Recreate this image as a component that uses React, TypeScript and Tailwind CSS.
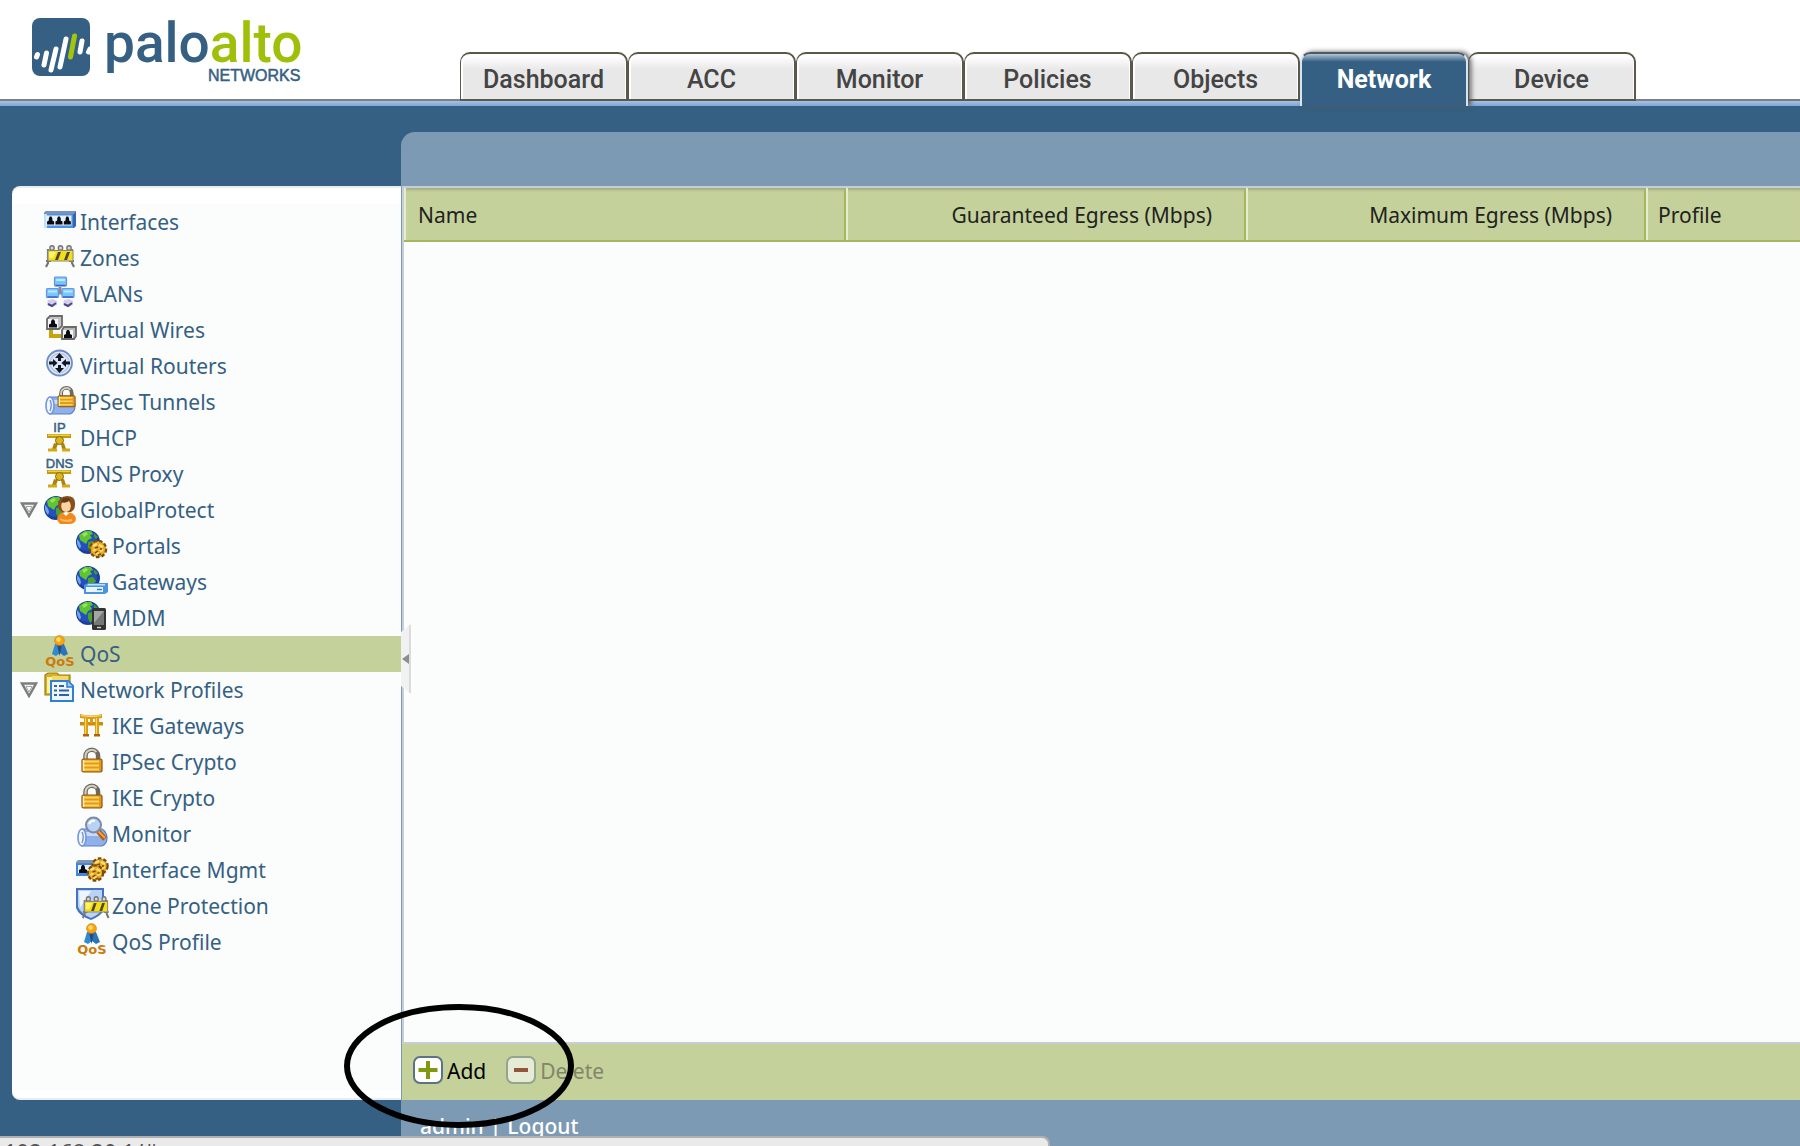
import type { ReactNode } from 'react';

const tabs = ['Dashboard', 'ACC', 'Monitor', 'Policies', 'Objects', 'Network', 'Device'];

function Icon({ children }: { children: ReactNode }) {
  return (
    <svg viewBox="0 0 32 32" className="h-8 w-8 shrink-0 overflow-visible" aria-hidden="true">
      {children}
    </svg>
  );
}

function Spade({ x, y }: { x: number; y: number }) {
  return <path d={`M${x - 1} ${y}h2l1 2v2l2 1v3h-8v-3l2-1v-2z`} fill="#0b0b12" />;
}

function Globe({ x = 12, y = 14, r = 12 }: { x?: number; y?: number; r?: number }) {
  const s = r / 12;
  return (
    <g transform={`translate(${x} ${y}) scale(${s})`}>
      <circle r="12" fill="#1d3f9c" />
      <circle cx="-1" cy="-1" r="10" fill="#2450bd" />
      <path d="M-11 -3a11 11 0 0 1 4 7l-1 3a11 11 0 0 1-3-6z" fill="#6fa8ee" />
      <path d="M-9 -7L-3 -11L3 -11L5 -8L2 -7L4 -4L0 -2L-2 2L-5 0L-8 -2z" fill="#5fc52e" />
      <path d="M0 0L5 -1L8 3L4 8L2 10L0 5z" fill="#4aa327" />
      <path d="M6 -9L10 -5L8 -3L6 -5z" fill="#3f9a2a" />
      <path d="M-6 -8L-2 -10L0 -8L-4 -5z" fill="#98e35a" />
    </g>
  );
}

function Gear({ x, y, r = 9 }: { x: number; y: number; r?: number }) {
  return (
    <g transform={`translate(${x} ${y})`}>
      <circle r={r - 1} fill="#d9981a" stroke="#7a4a08" strokeWidth="2.5" strokeDasharray="3.5 2" />
      <circle r={r - 2} fill="#e9ae28" />
      <path d="M-5 -3L-1 -5M1 -4L5 -2M-5 2L-2 0M2 2L5 1M-2 5L1 4" stroke="#fbe17a" strokeWidth="2" />
      <path d="M-3 -1L0 -2M2 0L4 0M-3 4L0 2M0 6L3 5" stroke="#7a4a08" strokeWidth="1.5" />
    </g>
  );
}

function Padlock() {
  return (
    <>
      <path d="M9.500 17v-5a6.300 6.300 0 0 1 12.600 0v5" fill="none" stroke="#6d6a62" strokeWidth="4.500" />
      <path d="M9.500 16v-4a6.300 6.300 0 0 1 11 -4" fill="none" stroke="#d4d0c2" strokeWidth="2" />
      <rect x="6" y="15" width="20" height="13" rx="1.500" fill="#e2991c" stroke="#8d5210" strokeWidth="1.200" />
      <path d="M8 17.500h15M8 21.500h15M8 25.500h15" stroke="#fbd65c" strokeWidth="1.800" />
      <path d="M7.500 16v11" stroke="#fff0a8" strokeWidth="1.500" />
    </>
  );
}

function Barrier() {
  return (
    <>
      <path d="M4 9v14l-2 4M28 9v14l2 4M2 21h5M25 21h5" fill="none" stroke="#77757c" strokeWidth="2.200" />
      <g fill="#d8d8dc" stroke="#77757c" strokeWidth="1.400">
        <circle cx="8" cy="8" r="2.200" />
        <circle cx="16.500" cy="8" r="2.200" />
        <circle cx="25" cy="8" r="2.200" />
      </g>
      <rect x="4" y="10.500" width="25" height="10.500" fill="#f5dd17" stroke="#8a8878" strokeWidth="1" />
      <path d="M14 12l-3 8h3l3-8zM23 12l-3 8h3l3-8z" fill="#4c4836" />
      <path d="M5 12h7l-3 6h-4z" fill="#fff36b" />
    </>
  );
}

function PC({ x, y, w = 12 }: { x: number; y: number; w?: number }) {
  return (
    <>
      <rect x={x} y={y} width={w} height="9" rx="1" fill="#74c8fa" stroke="#6f92e0" strokeWidth="1.200" />
      <path d={`M${x + 1.5} ${y + 2}h${w - 3}v2h-${w - 3}z`} fill="#b9e8ff" />
      <path d={`M${x + 1} ${y + 8.5}h${w - 2}`} stroke="#3f5fd0" strokeWidth="1.5" />
    </>
  );
}

function Server({ label }: { label: string }) {
  return (
    <>
      <text x="15.500" y="11.500" textAnchor="middle" fontFamily="Liberation Sans, sans-serif" fontSize="13" fill="#356083" stroke="#356083" strokeWidth="0.500">
        {label}
      </text>
      <path d="M3 14h24v4h-24z" fill="#c49a0c" />
      <path d="M4 14.500h22v1.500h-22z" fill="#ead04b" />
      <path d="M12 18h7v6h-7zM10 23l-2 6h4l2-5zM20 23l2 6h-4l-1-5z" fill="#a9830b" />
      <circle cx="15.500" cy="20.500" r="4" fill="#d9b51f" stroke="#8a6a08" />
      <path d="M4 28.500h9v3h-9zM18 28.500h8v3h-8z" fill="#d1aa14" />
    </>
  );
}

function QosIcon() {
  return (
    <>
      <path d="M11 8h5v9l-4 3l-4-2z" fill="#2f8bd0" />
      <path d="M20 8h-4v9l4 3l4-2z" fill="#2a74bd" />
      <path d="M13 8l2.500 12l2.500 -12z" fill="#294a78" />
      <circle cx="15.500" cy="4.500" r="4.800" fill="#f6a712" stroke="#e8861a" strokeWidth="1" />
      <circle cx="14.500" cy="3.500" r="2.200" fill="#ffe066" />
      <text x="16" y="30" textAnchor="middle" fontFamily="DejaVu Sans, sans-serif" fontSize="13" fontWeight="700" fill="#cc7a0a">
        QoS
      </text>
    </>
  );
}

function Pipe() {
  return (
    <>
      <path d="M6 13h20q5 3 5 9t-5 8h-20z" fill="#8fb0e8" stroke="#5b7ecb" strokeWidth="1.200" />
      <path d="M9 16h17v4h-17z" fill="#c9dbfa" />
      <ellipse cx="6" cy="21.500" rx="4" ry="8.500" fill="#f2f7ff" stroke="#7295da" strokeWidth="1.600" />
      <path d="M6 16q2.500 5 0 11" fill="none" stroke="#7295da" strokeWidth="1.500" />
    </>
  );
}

const icons: Record<string, ReactNode> = {
  interfaces: (
    <>
      <path d="M2 7h30v15l-2 2h-30v-15z" fill="#3566b5" />
      <path d="M2 7h30l-2 3h-30z" fill="#7d92b8" />
      <path d="M0 10h29v14h-29z" fill="#4c93e6" />
      <path d="M0 10h3v14h-3z" fill="#bfe0ff" />
      <path d="M2 11.500h25.500v10h-25.500z" fill="#e3f0fd" />
      <g transform="translate(0 12.500) scale(.88 1)">
        <Spade x={7.5} y={0} />
        <Spade x={17} y={0} />
        <Spade x={26.5} y={0} />
      </g>
    </>
  ),
  zones: <Barrier />,
  vlans: (
    <>
      <path d="M16 11v6M12 17h8" stroke="#8a8a8a" strokeWidth="3" />
      <path d="M4 24l5-1l4 2v4l-5 2l-5-3zM20 24l5-1l4 2v4l-5 2l-5-3z" fill="#d2d0ee" />
      <path d="M4 28l4 2l4-3M20 28l4 2l4-3" fill="none" stroke="#4c4687" strokeWidth="2" />
      <PC x={10.5} y={1} />
      <PC x={2.5} y={12.5} />
      <PC x={18} y={12.5} />
    </>
  ),
  wires: (
    <>
      <path d="M7 16v8h11" fill="none" stroke="#caa20b" strokeWidth="4" />
      <path d="M6 4h12v10l-3 3h-12v-10z" fill="#c4c4c4" stroke="#6a6a6a" strokeWidth="1.800" />
      <path d="M4 7h10v9h-10z" fill="#f4f4f4" />
      <Spade x={9} y={7.5} />
      <path d="M20 15h12v9l-2 3h-12v-9z" fill="#b8b8b8" stroke="#6a6a6a" strokeWidth="1.800" />
      <path d="M19 18h10v8h-10z" fill="#f4f4f4" />
      <Spade x={24} y={18} />
    </>
  ),
  routers: (
    <>
      <circle cx="15.500" cy="15" r="12.500" fill="#dbe6f8" stroke="#6f8cc4" strokeWidth="1.800" />
      <circle cx="15.500" cy="15" r="9.500" fill="none" stroke="#b6c8ea" strokeWidth="1.500" />
      <g fill="#15151f">
        <path d="M15.500 5l4.500 5h-3v3h-3v-3h-3zM15.500 25l4.500-5h-3v-3h-3v3h-3z" />
        <path d="M13.500 15l-4.500-4v2.500h-4v3h4v2.500zM17.500 15l4.500-4v2.500h4v3h-4v2.500z" />
      </g>
    </>
  ),
  tunnels: (
    <>
      <Pipe />
      <g transform="translate(9 -1) scale(.85)">
        <Padlock />
      </g>
    </>
  ),
  dhcp: <Server label="IP" />,
  dns: <Server label="DNS" />,
  globalprotect: (
    <>
      <Globe x={12} y={16} r={12} />
      <path d="M14 14q0-10 9-10t8 9q0 5-4 7h-9q-4-2-4-6z" fill="#8a4f1c" />
      <ellipse cx="22" cy="14" rx="4.800" ry="6" fill="#fbd3a2" />
      <path d="M17 10q5 2 9-2l-1-2h-6z" fill="#6b3a10" />
      <path d="M13 28q1-8 9-8t10 6q0 6-7 6h-9z" fill="#f08a1e" />
      <path d="M19 21l3 3l3-3l-3-1z" fill="#fff" />
      <path d="M16 27q5 3 12 1" stroke="#ffb95a" strokeWidth="2" fill="none" />
    </>
  ),
  portals: (
    <>
      <Globe x={12} y={14} />
      <Gear x={22} y={21} r={9} />
    </>
  ),
  gateways: (
    <>
      <Globe x={12} y={14} />
      <path d="M8 21l4-2h20v9l-3 2h-21z" fill="#4a94e0" />
      <path d="M10 23h17v5h-17z" fill="#e8f4ff" />
      <path d="M12 20h17v1.500h-18z" fill="#bfe0fb" />
      <path d="M21 25.500h5" stroke="#3c7cc6" strokeWidth="1.500" />
    </>
  ),
  mdm: (
    <>
      <Globe x={12} y={13} />
      <rect x="16" y="8" width="14" height="22" rx="1.500" fill="#333" />
      <rect x="18" y="11" width="10" height="14" fill="#777" />
      <path d="M18 11h10l-10 12z" fill="#a5a5a5" />
      <path d="M21 27.500h4" stroke="#ccc" strokeWidth="1.500" />
    </>
  ),
  qos: <QosIcon />,
  profiles: (
    <>
      <path d="M1 3l3-2h9l2 2h11v20h-25z" fill="#d9b125" stroke="#a07c10" strokeWidth="1.200" />
      <path d="M3 5h5v16h-5z" fill="#fff2a6" />
      <path d="M8 4h16v4h-16z" fill="#f6db62" />
      <path d="M7 9h17l5 5v15h-22z" fill="#eef6ff" stroke="#2f7fd2" strokeWidth="2" />
      <path d="M23 9v6h6" fill="#9fcbf6" stroke="#2f7fd2" strokeWidth="1.500" />
      <path d="M10 14h3M10 18.500h3M10 23h3M15 14h5M15 18.500h10M15 23h10" stroke="#2c62a8" strokeWidth="2" />
    </>
  ),
  ike: (
    <>
      <path d="M4 6q11 3 22 0v4q-11 2-22 0z" fill="#dd9c12" />
      <path d="M5 7.500q10 2 20 0" stroke="#ffe27a" fill="none" strokeWidth="1.200" />
      <path d="M4 14h23v3.500h-23z" fill="#cf8b0e" />
      <path d="M8 9h4v19h-4zM19 9h4v19h-4zM14 10h3v5h-3z" fill="#dd9c12" />
      <path d="M9.500 10v17M20.500 10v17" stroke="#ffd85a" strokeWidth="1.200" />
      <path d="M7 26h6v2.500h-6zM18 26h6v2.500h-6z" fill="#a86a08" />
    </>
  ),
  lock: <Padlock />,
  monitor: (
    <>
      <Pipe />
      <path d="M22 15l7 8" stroke="#b65c10" strokeWidth="5" />
      <path d="M22 15l7 7" stroke="#f3a33c" strokeWidth="2" />
      <circle cx="17.500" cy="9" r="7.500" fill="#b7d3f4" stroke="#7d8aa5" strokeWidth="2" />
      <path d="M13 8q2-4 6-3" stroke="#fff" strokeWidth="2" fill="none" />
    </>
  ),
  ifmgmt: (
    <>
      <path d="M2 8h22v14l-2 2h-22v-14z" fill="#8593ac" />
      <path d="M0 11h20v13h-20z" fill="#3f86dc" />
      <path d="M2 13h16v8h-16z" fill="#e3f0fd" />
      <Spade x={7} y={13} />
      <Gear x={24} y={14} r={8.5} />
      <Gear x={19.5} y={21} r={8.5} />
    </>
  ),
  zoneprotection: (
    <>
      <path d="M0 0h28v22q-3 6-13 10q-12-4-15-12z" fill="#4573c4" />
      <path d="M2 2h24v19q-3 6-11 9q-10-4-13-11z" fill="#b9d2f6" />
      <path d="M3 3h12l-11 17z" fill="#eef5ff" />
      <g transform="translate(5 3) scale(.92 1)">
        <Barrier />
      </g>
    </>
  ),
};

type Item = { label: string; icon: string; child?: boolean; open?: boolean; active?: boolean };

const items: Item[] = [
  { label: 'Interfaces', icon: 'interfaces' },
  { label: 'Zones', icon: 'zones' },
  { label: 'VLANs', icon: 'vlans' },
  { label: 'Virtual Wires', icon: 'wires' },
  { label: 'Virtual Routers', icon: 'routers' },
  { label: 'IPSec Tunnels', icon: 'tunnels' },
  { label: 'DHCP', icon: 'dhcp' },
  { label: 'DNS Proxy', icon: 'dns' },
  { label: 'GlobalProtect', icon: 'globalprotect', open: true },
  { label: 'Portals', icon: 'portals', child: true },
  { label: 'Gateways', icon: 'gateways', child: true },
  { label: 'MDM', icon: 'mdm', child: true },
  { label: 'QoS', icon: 'qos', active: true },
  { label: 'Network Profiles', icon: 'profiles', open: true },
  { label: 'IKE Gateways', icon: 'ike', child: true },
  { label: 'IPSec Crypto', icon: 'lock', child: true },
  { label: 'IKE Crypto', icon: 'lock', child: true },
  { label: 'Monitor', icon: 'monitor', child: true },
  { label: 'Interface Mgmt', icon: 'ifmgmt', child: true },
  { label: 'Zone Protection', icon: 'zoneprotection', child: true },
  { label: 'QoS Profile', icon: 'qos', child: true },
];

function NavItem({ item }: { item: Item }) {
  return (
    <li className={`flex h-9 items-start ${item.active ? 'bg-[#c5d19b]' : ''} ${item.child ? 'pl-16' : 'pl-2'}`}>
      {!item.child &&
        (item.open ? (
          <button type="button" aria-label={`Collapse ${item.label}`} className="flex h-9 w-6 items-center">
            <svg viewBox="0 0 18 16" className="h-4 w-[18px]" aria-hidden="true">
              <path d="M2 1.500h14L9 14z" fill="#f4f4f4" stroke="#7d7d7d" strokeWidth="2.400" />
              <path d="M6 4.500h6L9 10z" fill="#fff" stroke="#a5a5a5" />
            </svg>
          </button>
        ) : (
          <span className="w-6" />
        ))}
      <a href="#" className="flex items-start gap-1 whitespace-nowrap leading-9 text-[#356083]">
        <Icon>{icons[item.icon]}</Icon>
        {item.label}
      </a>
    </li>
  );
}

function Logo() {
  return (
    <div className="flex h-full w-[460px] shrink-0 items-start pt-[18px] pl-8">
      <svg viewBox="0 0 58 58" className="h-[58px] w-[58px] shrink-0" aria-hidden="true">
        <rect width="58" height="58" rx="8" fill="#356083" />
        <g stroke="#fff" strokeWidth="5" strokeLinecap="round">
          <path d="M5.500 36.500L4.500 39" />
          <path d="M14.500 35L12 47" />
          <path d="M24 31L19 52" />
          <path d="M34 21L28 49" />
          <path d="M50 23L48 34" />
          <path d="M58 31L56.500 34" />
        </g>
        <path d="M42.500 18L38.500 39" stroke="#a3c60a" strokeWidth="5" strokeLinecap="round" />
      </svg>
      <div className="ml-[14px] flex flex-col items-end">
        <span className="font-[Roboto] text-[55px] leading-[50px] font-medium text-[#356083]">
          palo<span className="text-[#9fc009]">alto</span>
        </span>
        <span className="mr-[2px] font-['Liberation_Sans'] text-base leading-4 text-[#356083] [-webkit-text-stroke:0.5px_#356083]">
          NETWORKS
        </span>
      </div>
    </div>
  );
}

function Tab({ label }: { label: string }) {
  const active = label === 'Network';
  return (
    <button
      type="button"
      role="tab"
      aria-selected={active}
      className={
        active
          ? 'relative z-10 -mb-[5px] h-[54px] w-[168px] rounded-t-[10px] border-2 border-b-0 border-[#d9e4ee] border-t-[#4d5a62] bg-linear-to-b from-[#b4c7d6] from-0% via-[#356083] via-15% to-[#356083] text-white shadow-[3px_0_5px_#555]'
          : 'h-[49px] w-[168px] rounded-t-[10px] border-r-2 border-t-2 border-b-2 border-l border-[#5b574a] bg-linear-to-b from-white from-5% to-[#e8e8e8] to-35% pt-[6px] text-[#444] shadow-[inset_2px_1px_0_#fff,inset_-1px_0_0_#fff]'
      }
    >
      <span className={active ? 'font-bold' : 'font-medium'}>{label}</span>
    </button>
  );
}

const th =
  'border-b-2 border-b-[#a3b85c] pt-1 font-normal shadow-[inset_2px_0_0_#e6edcf,inset_0_4px_3px_-2px_#a3ad80]';
const thRule = 'border-r-2 border-r-[#a3b85c]';

export default function App() {
  return (
    <div className="relative flex h-screen min-h-[1000px] flex-col overflow-hidden bg-[#356083] font-['Noto_Sans',sans-serif] text-[21px] text-[#222]">
      <header className="flex h-[101px] shrink-0 items-end border-b-2 border-[#7f7f7f] bg-white">
        <Logo />
        <div role="tablist" className="-mb-[2px] flex items-end font-[Roboto] text-[25px]">
          {tabs.map((t) => (
            <Tab key={t} label={t} />
          ))}
        </div>
      </header>
      <div className="h-[5px] shrink-0 bg-linear-to-b from-[#a5c3e6] to-[#7fa6d3]" />

      <div className="flex min-h-0 flex-1">
        <aside className="flex w-[401px] shrink-0 flex-col pt-20 pb-[46px] pl-3">
          <nav aria-label="Network" className="flex flex-1 flex-col rounded-l-lg border-y-2 border-[#e9edf0] bg-white py-4 pb-2">
            <ul className="flex-1 bg-[#fbfdfc]">
              {items.map((i) => (
                <NavItem key={i.label} item={i} />
              ))}
            </ul>
          </nav>
        </aside>

        <div className="flex min-w-0 flex-1 flex-col pt-[26px]">
          <main className="relative flex min-h-0 flex-1 flex-col rounded-tl-[14px] bg-[#7d9ab4] pt-[54px] pl-px">
            <section className="flex min-h-0 flex-1 flex-col border-t-2 border-l-2 border-[#c8cdd6] bg-[#fbfdfc]">
              <table className="w-full table-fixed border-separate border-spacing-0">
                <thead>
                  <tr className="h-[54px] bg-[#c5d19b]">
                    <th className={`w-[442px] pl-[14px] text-left ${th} ${thRule}`}>Name</th>
                    <th className={`w-[400px] pr-8 text-right ${th} ${thRule}`}>Guaranteed Egress (Mbps)</th>
                    <th className={`w-[400px] pr-8 text-right ${th} ${thRule}`}>Maximum Egress (Mbps)</th>
                    <th className={`pl-3 text-left ${th}`}>Profile</th>
                  </tr>
                </thead>
                <tbody />
              </table>
            </section>
            <div className="relative flex h-[58px] shrink-0 items-center gap-5 border-t-2 border-[#c8cdd6] bg-[#c5d19b] pl-[11px]">
              <button type="button" className="flex items-center gap-1 text-black">
                <svg viewBox="0 0 30 28" className="mb-1 h-7 w-[30px]" aria-hidden="true">
                  <rect x="1" y="1" width="28" height="26" rx="6" fill="#fff" stroke="#5c7383" strokeWidth="2" />
                  <path d="M15 5v18M5.500 14h19" stroke="#7f9a10" strokeWidth="4" />
                </svg>
                Add
              </button>
              <button type="button" disabled className="flex items-center gap-1 text-[#818668]">
                <svg viewBox="0 0 30 28" className="mb-1 h-7 w-[30px]" aria-hidden="true">
                  <rect x="1" y="1" width="28" height="26" rx="6" fill="#e6ebd5" stroke="#93a491" strokeWidth="2" />
                  <path d="M8 14h14" stroke="#91563c" strokeWidth="4" />
                </svg>
                Delete
              </button>
              <svg viewBox="0 0 230 124" className="pointer-events-none absolute -top-10 -left-[58px] z-20 h-[124px] w-[230px]" aria-hidden="true">
                <ellipse cx="115" cy="62" rx="112" ry="59" fill="none" stroke="#000" strokeWidth="6" />
              </svg>
            </div>
            <footer className="flex h-[46px] shrink-0 items-start gap-[6px] pt-3 pl-[18px] leading-7 font-medium text-white">
              <a href="#">admin</a>
              <span>|</span>
              <a href="#">Logout</a>
            </footer>
            <button type="button" aria-label="Collapse sidebar" className="absolute top-[492px] left-0 h-[70px] w-[10px]">
              <svg viewBox="0 0 10 70" className="h-full w-full" aria-hidden="true">
                <path d="M0 8L10 0V70L0 62z" fill="#f1f1f2" />
                <path d="M9 1V69" stroke="#dcdcdc" strokeWidth="2" />
                <path d="M1 35L8 30V40z" fill="#8d8d8d" />
              </svg>
            </button>
          </main>
        </div>
      </div>

      <div role="status" className="absolute bottom-0 left-0 z-30 h-[10px] w-[1050px] overflow-hidden rounded-tr-lg border-t-2 border-r-2 border-[#b0b0b0] bg-[#eaeaea] pt-px pl-1 text-[#555]">
        <span className="block text-[22px] leading-6">192.168.20.1/#</span>
      </div>
    </div>
  );
}
